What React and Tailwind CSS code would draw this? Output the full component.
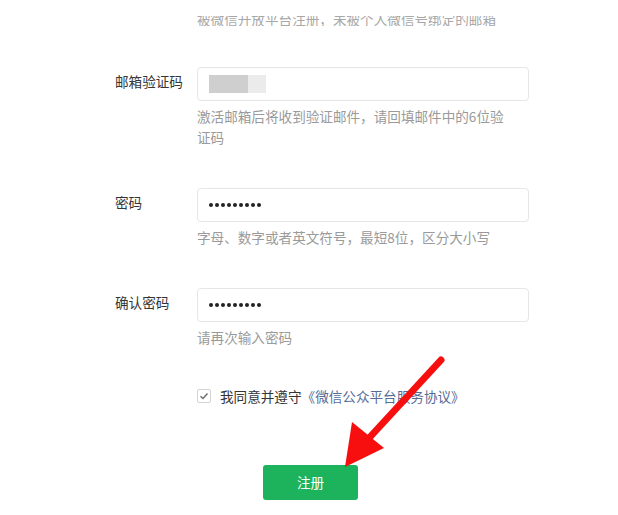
import React from "react";

const font = { fontFamily: '"Noto Sans CJK SC", "Noto Sans", sans-serif' };

function Row({ label, children, helper, className = "" }) {
  return (
    <div className={"flex items-start " + className}>
      <div className="w-[82px] shrink-0 leading-[28px] text-[13.6px] text-[#353535]">{label}</div>
      <div className="w-[332px]">
        {children}
        <div className="w-[318px] mt-[5px] text-[13.6px] leading-[21px] text-[#9a9a9a]">{helper}</div>
      </div>
    </div>
  );
}

function Input({ children }) {
  return (
    <div className="h-[34px] rounded-[4px] border border-[#e6e6e6] bg-white flex items-center px-[11px]">
      {children}
    </div>
  );
}

function Dots() {
  return (
    <div className="flex gap-[2.5px]">
      {Array.from({ length: 9 }).map((_, i) => (
        <span key={i} className="block w-[3.5px] h-[3.5px] rounded-full bg-[#222]" />
      ))}
    </div>
  );
}

export default function App() {
  return (
    <div className="relative w-[618px] h-[515px] bg-white overflow-hidden" style={font}>
      <div className="pl-[115px]">
        <div className="ml-[82px] mt-[16px] h-[10px] overflow-hidden">
          <div className="-mt-[7px] text-[13.6px] leading-[20px] text-[#a8a8a8] whitespace-nowrap">
            被微信开放平台注册，未被个人微信号绑定的邮箱
          </div>
        </div>

        <Row
          className="mt-[41px]"
          label="邮箱验证码"
          helper="激活邮箱后将收到验证邮件，请回填邮件中的6位验证码"
        >
          <Input>
            <div className="flex blur-[0.6px]">
              <div className="w-[39px] h-[18px] bg-[#cfcfcf]" />
              <div className="w-[18px] h-[18px] bg-[#ebebeb]" />
            </div>
          </Input>
        </Row>

        <Row className="mt-[40px]" label="密码" helper="字母、数字或者英文符号，最短8位，区分大小写">
          <Input>
            <Dots />
          </Input>
        </Row>

        <Row className="mt-[40px]" label="确认密码" helper="请再次输入密码">
          <Input>
            <Dots />
          </Input>
        </Row>

        <div className="ml-[82px] mt-[38px] flex items-center">
          <div className="w-[14px] h-[14px] border border-[#d4d4d4] rounded-[2px] bg-white flex items-center justify-center">
            <svg width="10" height="10" viewBox="0 0 10 10">
              <path d="M1.5 5.2 L4 7.5 L8.5 2.5" fill="none" stroke="#6f6f6f" strokeWidth="1.5" />
            </svg>
          </div>
          <span className="ml-[9px] text-[13.6px] leading-[20px] text-[#353535]">我同意并遵守</span>
          <span className="text-[13.6px] leading-[20px] text-[#576b95]">《微信公众平台服务协议》</span>
        </div>
      </div>

      <div className="pl-[263px] mt-[59px]">
        <button className="w-[95px] h-[35px] rounded-[3px] bg-[#1db35c] text-white text-[13.6px] flex items-center justify-center">
          注册
        </button>
      </div>

      <svg className="absolute inset-0 pointer-events-none" width="618" height="515" viewBox="0 0 618 515">
        <line x1="441" y1="360" x2="370" y2="437" stroke="#f70f0f" strokeWidth="7" strokeLinecap="round" />
        <polygon points="345,467 352,422 384,448" fill="#f70f0f" />
      </svg>
    </div>
  );
}
